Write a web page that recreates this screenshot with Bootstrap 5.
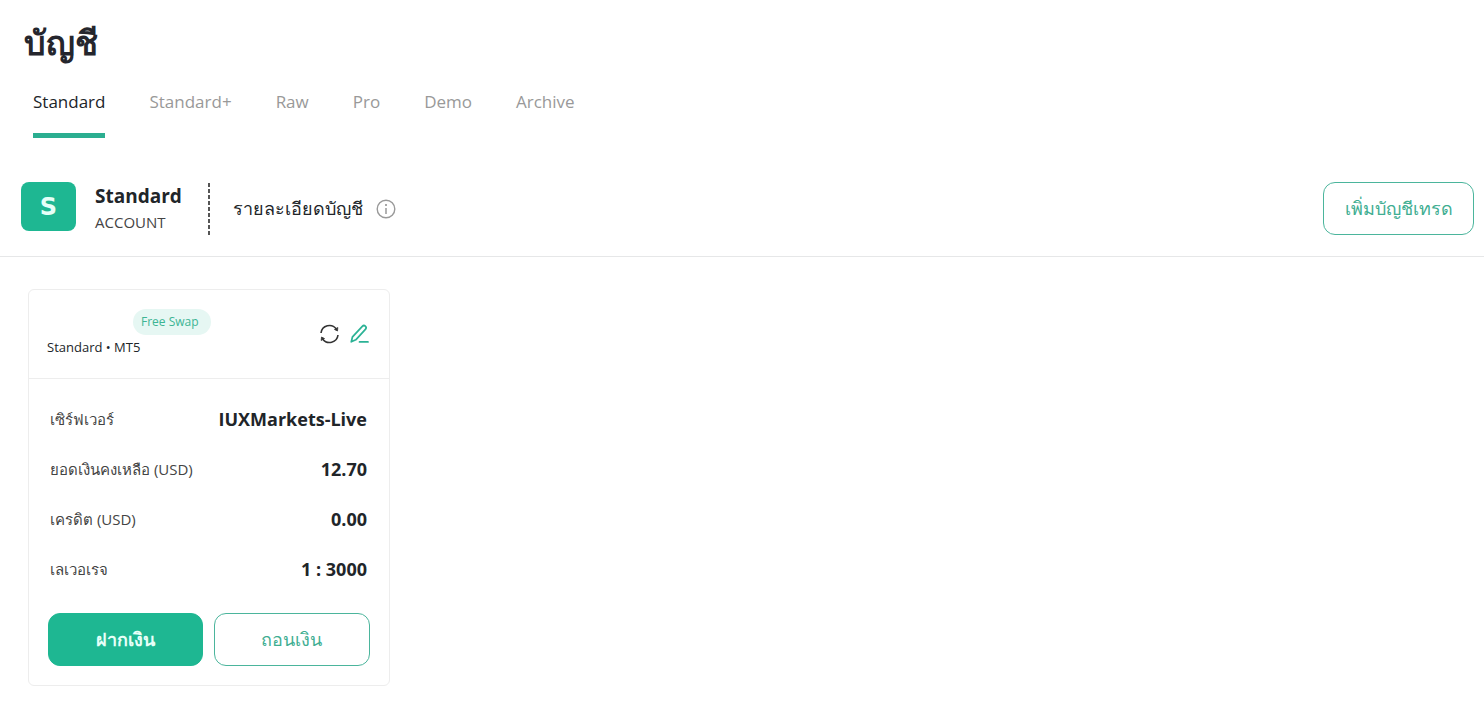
<!DOCTYPE html>
<html lang="th">
<head>
<meta charset="utf-8">
<meta name="viewport" content="width=device-width, initial-scale=1">
<title>บัญชี</title>
<link rel="stylesheet" href="https://cdn.jsdelivr.net/npm/bootstrap@5.3.0/dist/css/bootstrap.min.css">
<style>
:root { --brand: #1eb792; --line: #e6e7e8; --ink: #212529; }
body { font-family: "Open Sans", "Noto Sans", sans-serif; color: var(--ink); background: #fff; }
.page-title { font-size: 34px; line-height: 36px; font-weight: 700; color: #25262d; }
.account-tabs { gap: 44px; padding: 0 33px; }
.account-tabs .nav-link { padding: 0 0 17px; font-size: 17px; line-height: 28px; color: #999; border: 0; border-bottom: 5px solid transparent; border-radius: 0; }
.account-tabs .nav-link.active { color: var(--ink); background: none; border-bottom-color: #2bae90; }
.type-bar { border-bottom: 1px solid var(--line); padding: 44px 10px 21px 21px; }
.type-logo { width: 55px; height: 49px; margin-bottom: 4px; border-radius: 8px; background: var(--brand); color: #e6fff8; font: 700 24px "DejaVu Sans", sans-serif; }
.type-text { margin-left: 19px; width: 113px; }
.type-name { font-size: 19px; line-height: 26px; font-weight: 700; }
.type-kind { font-size: 15px; line-height: 26px; color: #444; }
.type-info { height: 52px; padding-left: 25px; gap: 13px; font-size: 18px; background: repeating-linear-gradient(#555 0 4px, transparent 4px 6px) left / 2px 100% no-repeat; }
.add-btn { min-width: 151px; }
.btn-brand, .btn-brand-line { height: 53px; border-radius: 12px; font-size: 18px; --bs-btn-border-color: var(--brand); --bs-btn-hover-bg: var(--brand); --bs-btn-hover-color: #fff; --bs-btn-hover-border-color: var(--brand); }
.btn-brand { --bs-btn-bg: var(--brand); --bs-btn-color: #e6fff8; font-weight: 700; }
.btn-brand-line { --bs-btn-color: #3fae92; --bs-btn-border-color: #4bb59c; }
.cards-area { padding: 32px 28px; }
.account-card { width: 362px; border-color: #ededed; border-radius: 6px; }
.account-card .card-header { height: 89px; background: none; border-color: #ededed; padding: 19px 18px; }
.swap-tag { margin-left: 86px; background: #e6f7f3; color: #3db594; font-size: 12px; line-height: 26px; font-weight: 400; padding: 0 12px 0 8px; }
.platform { font-size: 13px; line-height: 24px; }
.icon-btn { border: 0; background: none; padding: 0; line-height: 1; }
.account-card .card-body { padding: 28px 19px 19px; }
.detail-row { font-size: 15px; line-height: 24px; padding: 0 3px 0 2px; margin-bottom: 26px; }
.detail-row dt { font-weight: 400; color: #444; }
.detail-row dd { font-size: 18px; font-weight: 700; margin: 0; }
.actions { gap: 11px; margin-top: 32px; }
.actions .btn { flex-basis: 0; }
</style>
</head>
<body>
<header class="pt-4 px-4">
  <h1 class="page-title m-0">บัญชี</h1>
</header>
<ul class="nav account-tabs mt-4 pt-1">
  <li class="nav-item"><a class="nav-link active" aria-current="page" href="#">Standard</a></li>
  <li class="nav-item"><a class="nav-link" href="#">Standard+</a></li>
  <li class="nav-item"><a class="nav-link" href="#">Raw</a></li>
  <li class="nav-item"><a class="nav-link" href="#">Pro</a></li>
  <li class="nav-item"><a class="nav-link" href="#">Demo</a></li>
  <li class="nav-item"><a class="nav-link" href="#">Archive</a></li>
</ul>
<section class="type-bar d-flex align-items-center">
  <div class="type-logo d-flex align-items-center justify-content-center">S</div>
  <div class="type-text">
    <div class="type-name">Standard</div>
    <div class="type-kind">ACCOUNT</div>
  </div>
  <div class="type-info d-flex align-items-center">
    <span>รายละเอียดบัญชี</span>
    <button class="icon-btn" type="button" aria-label="ข้อมูล">
      <svg class="d-block" width="20" height="20" viewBox="0 0 20 20" fill="none" stroke="#999"><circle cx="10" cy="10" r="8.8" stroke-width="1.4"/><path d="M10 9v6" stroke-width="1.5"/><path d="M10 5v2" stroke-width="1.7"/></svg>
    </button>
  </div>
  <button class="btn btn-brand-line ms-auto add-btn" type="button">เพิ่มบัญชีเทรด</button>
</section>
<main class="cards-area">
  <article class="card account-card">
    <div class="card-header d-flex align-items-center justify-content-between">
      <div class="d-flex flex-column">
        <span class="badge rounded-pill swap-tag">Free Swap</span>
        <span class="platform">Standard • MT5</span>
      </div>
      <div class="d-flex gap-2">
        <button class="icon-btn" type="button" aria-label="รีเฟรช">
          <svg class="d-block" width="22" height="22" viewBox="0 0 22 22" fill="none" stroke="#333" stroke-width="1.6"><path d="M2 10a8.500 8.500 0 0 1 15.300-4M19 12a8.500 8.500 0 0 1-15.300 4"/><path d="M18.800 4.500l-.3 3.500-3-1.500zM2.200 17.500l.3-3.500 3 1.500z" fill="#333" stroke="#333" stroke-width=".8" stroke-linejoin="round"/></svg>
        </button>
        <button class="icon-btn" type="button" aria-label="แก้ไข">
          <svg class="d-block" width="22" height="22" viewBox="0 0 22 22" fill="none" stroke="#2bb295" stroke-width="1.7" stroke-linejoin="round" stroke-linecap="round"><path d="M2.300 18.800l1.200-5L13.300 3.300c2-2 5 .6 3.300 2.900L6.800 16.800z"/><path d="M10.500 18.900h8.500"/></svg>
        </button>
      </div>
    </div>
    <div class="card-body">
      <dl class="m-0">
        <div class="detail-row d-flex justify-content-between"><dt>เซิร์ฟเวอร์</dt><dd>IUXMarkets-Live</dd></div>
        <div class="detail-row d-flex justify-content-between"><dt>ยอดเงินคงเหลือ (USD)</dt><dd>12.70</dd></div>
        <div class="detail-row d-flex justify-content-between"><dt>เครดิต (USD)</dt><dd>0.00</dd></div>
        <div class="detail-row d-flex justify-content-between"><dt>เลเวอเรจ</dt><dd>1 : 3000</dd></div>
      </dl>
      <div class="d-flex actions">
        <button class="btn btn-brand flex-fill" type="button">ฝากเงิน</button>
        <button class="btn btn-brand-line flex-fill" type="button">ถอนเงิน</button>
      </div>
    </div>
  </article>
</main>
<script src="https://cdn.jsdelivr.net/npm/bootstrap@5.3.0/dist/js/bootstrap.bundle.min.js"></script>
</body>
</html>
